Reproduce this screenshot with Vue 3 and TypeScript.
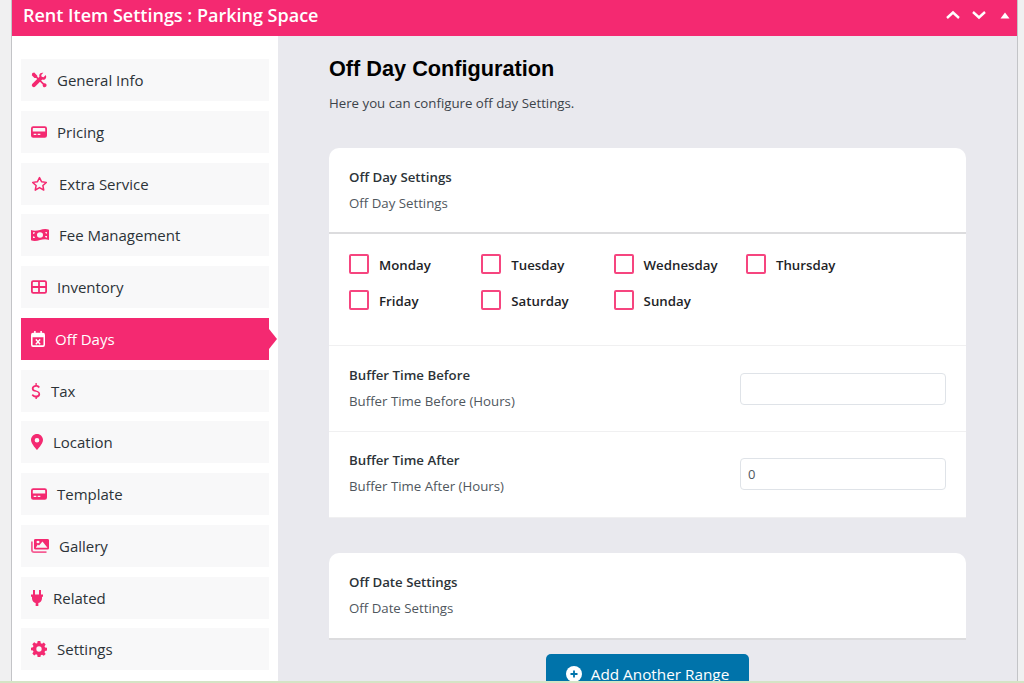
<script setup lang="ts">
const navItems = [
  { label: 'General Info', icon: 'tools', w: 16, gap: 10 },
  { label: 'Pricing', icon: 'card', w: 16, gap: 10 },
  { label: 'Extra Service', icon: 'star', w: 17, gap: 11 },
  { label: 'Fee Management', icon: 'money', w: 18, gap: 10 },
  { label: 'Inventory', icon: 'grid', w: 16, gap: 10 },
  { label: 'Off Days', icon: 'calendar', w: 14, gap: 10, active: true },
  { label: 'Tax', icon: 'dollar', w: 10, gap: 10 },
  { label: 'Location', icon: 'pin', w: 12, gap: 10 },
  { label: 'Template', icon: 'card', w: 16, gap: 10 },
  { label: 'Gallery', icon: 'images', w: 18, gap: 10 },
  { label: 'Related', icon: 'plug', w: 12, gap: 10 },
  { label: 'Settings', icon: 'gear', w: 16, gap: 10 }
]
const days = ['Monday', 'Tuesday', 'Wednesday', 'Thursday', 'Friday', 'Saturday', 'Sunday']
</script>

<template>
  <div class="page">
    <div class="panel">
      <header class="topbar">
        <h2>Rent Item Settings : Parking Space</h2>
        <div class="handles">
          <svg width="16" height="10" viewBox="0 0 16 10"><path d="M2 8l6-5.5L14 8" fill="none" stroke="#fff" stroke-width="2.4" /></svg>
          <svg width="16" height="10" viewBox="0 0 16 10"><path d="M2 2l6 5.5L14 2" fill="none" stroke="#fff" stroke-width="2.4" /></svg>
          <svg class="toggle" width="10" height="7" viewBox="0 0 10 7"><path d="M5 0.5L9.5 6.5H0.5z" fill="#fff" /></svg>
        </div>
      </header>
      <div class="body">
        <nav class="sidebar">
          <a v-for="item in navItems" :key="item.label" class="nav-item" :class="{ active: item.active }">
            <svg class="nav-icon" viewBox="0 0 18 18" :width="item.w" height="16" preserveAspectRatio="none" fill="currentColor">
              <template v-if="item.icon === 'tools'">
                <path d="M1.500 1.200l2.200-.7 3.400 3.600v1.200l7.400 7.400c1-.3 2 0 2.600.9.700 1 .5 2.300-.4 3.100s-2.200.7-3-.2c-.6-.7-.8-1.600-.5-2.400L5.800 6.700H3.900L.9 3.600z" />
                <path d="M16.600 3.500l-2.500 2.400-2.100-.5-.5-2.100L13.900.9c-1.900-.6-4 .3-4.500 2.300-.2.8-.1 1.500.1 2.200L1.600 13.200c-.9.900-.9 2.300 0 3.200s2.300.9 3.200 0l7.900-7.900c.7.2 1.500.3 2.200.1 2-.5 2.900-2.900 1.700-5.100z" />
              </template>
              <path v-else-if="item.icon === 'card'" fill-rule="evenodd" d="M2.500 2.500h13A2.500 2.500 0 0 1 18 5v8a2.500 2.500 0 0 1-2.500 2.500h-13A2.500 2.500 0 0 1 0 13V5a2.500 2.500 0 0 1 2.500-2.500zM2 5v3.500h14V5a.5.5 0 0 0-.5-.5h-13A.5.5 0 0 0 2 5zm1 6v1.500h3V11zm4.500 0v1.500h3V11z" />
              <path v-else-if="item.icon === 'star'" d="M9 1.800l2.200 4.700 5 .7-3.600 3.600.9 5.100L9 13l-4.500 2.900.9-5.100-3.600-3.600 5-.7z" fill="none" stroke="currentColor" stroke-width="1.600" stroke-linejoin="round" />
              <path v-else-if="item.icon === 'money'" fill-rule="evenodd" d="M0 3.500c3 1.200 6 .8 9-.2s6-1.500 9-.3v11.500c-3-1.200-6-.8-9 .2s-6 1.500-9 .3zm9 2.500a3 3 0 1 0 0 6 3 3 0 0 0 0-6zM2 6v2a2 2 0 0 0 2-2zm12 4a2 2 0 0 0 2 2v-2zm0-4a2 2 0 0 0 2 1.500V5.500zM2 10.500V12.500h2a2 2 0 0 0-2-2z" />
              <path v-else-if="item.icon === 'grid'" fill-rule="evenodd" d="M2.500 1.500h13A2.500 2.500 0 0 1 18 4v10a2.500 2.500 0 0 1-2.500 2.500h-13A2.500 2.500 0 0 1 0 14V4a2.500 2.500 0 0 1 2.500-2.500zM2 4v4h6V3.500H2.500A.5.5 0 0 0 2 4zm8-.5V8h6V4a.5.5 0 0 0-.5-.5zM2 10v4a.5.5 0 0 0 .5.5H8V10zm8 0v4.500h5.500a.5.5 0 0 0 .5-.5v-4z" />
              <path v-else-if="item.icon === 'calendar'" fill-rule="evenodd" d="M4 0h2v2h6V0h2v2h1.500A2.500 2.500 0 0 1 18 4.500v11a2.500 2.500 0 0 1-2.500 2.500h-13A2.500 2.500 0 0 1 0 15.500v-11A2.500 2.500 0 0 1 2.500 2H4zM2 7v8.500a.5.5 0 0 0 .5.5h13a.5.5 0 0 0 .5-.5V7zm4.800 1.800L9 11l2.200-2.200 1.200 1.200-2.200 2.200 2.200 2.200-1.200 1.200L9 13.400l-2.200 2.200-1.200-1.200 2.200-2.200L5.600 10z" />
              <path v-else-if="item.icon === 'dollar'" d="M8 0h2.400v2.200c2.300.2 4.300 1 5.600 2l-2 1.800c-1.300-1.100-3-1.700-4.900-1.700-2.600 0-4.300.8-4.300 1.900 0 1.200 1.700 1.600 4.500 2.100 3.700.6 7.200 1.500 7.200 4.300 0 2.100-2.400 3.600-5.900 3.900V18H8v-1.700c-2.900-.2-5.400-1.100-6.800-2.400l2.300-1.600c1.400 1.100 3.300 1.800 5.400 1.800 2.900 0 4.500-.8 4.500-2 0-1.300-2-1.700-4.700-2.200C4.700 9.500 1.400 8.600 1.400 6.100c0-2 2.600-3.500 6.600-3.900z" />
              <path v-else-if="item.icon === 'pin'" fill-rule="evenodd" d="M9 0c5 0 9 3 9 6.800C18 11 9 18 9 18S0 11 0 6.800C0 3 4 0 9 0zm0 4.500a3.500 2.600 0 1 0 0 5.200 3.500 2.600 0 0 0 0-5.200z" />
              <template v-else-if="item.icon === 'images'">
                <path fill-rule="evenodd" d="M4.500 1h12A1.500 1.500 0 0 1 18 2.500v9a1.500 1.500 0 0 1-1.500 1.500h-12A1.500 1.500 0 0 1 3 11.500v-9A1.500 1.500 0 0 1 4.500 1zM7 3a1.500 1.500 0 1 0 0 3 1.500 1.500 0 0 0 0-3zm4.500 1L8 8.500 6.800 7.200 4.800 11h11.700z" />
                <path d="M0 4h1.800v9.500c0 .8.700 1.500 1.500 1.500H15.500v1.800H3c-1.700 0-3-1.300-3-3z" opacity=".75" />
              </template>
              <path v-else-if="item.icon === 'plug'" d="M3 0h3v5h6V0h3v5h3v2.500h-1.500v2c0 2.500-2.500 4.500-5.500 5V18H7v-3.500c-3-.5-5.500-2.500-5.500-5v-2H0V5h3z" />
              <path v-else-if="item.icon === 'gear'" fill-rule="evenodd" d="M7.500 0h3l.5 2.400 1.400.6 2-1.300 2.100 2.100-1.300 2 .6 1.400 2.200.5v3l-2.200.5-.6 1.400 1.300 2-2.100 2.100-2-1.300-1.400.6-.5 2.500h-3L7 15.600l-1.400-.6-2 1.300-2.100-2.100 1.300-2-.6-1.400L0 10.500v-3l2.200-.5.6-1.400-1.300-2 2.100-2.100 2 1.300L7 2.400zM9 6a3 3 0 1 0 0 6 3 3 0 0 0 0-6z" />
            </svg>
            <span :style="{ marginLeft: item.gap + 'px' }">{{ item.label }}</span>
          </a>
        </nav>
        <main class="content">
          <h1>Off Day Configuration</h1>
          <p class="intro">Here you can configure off day Settings.</p>

          <section class="card">
            <div class="card-head">
              <h3>Off Day Settings</h3>
              <span>Off Day Settings</span>
            </div>
            <div class="days">
              <label v-for="day in days" :key="day" class="day">
                <i class="check"></i>
                <b>{{ day }}</b>
              </label>
            </div>
            <div class="row">
              <div class="row-text">
                <h3>Buffer Time Before</h3>
                <span>Buffer Time Before (Hours)</span>
              </div>
              <input type="text" />
            </div>
            <div class="row">
              <div class="row-text">
                <h3>Buffer Time After</h3>
                <span>Buffer Time After (Hours)</span>
              </div>
              <input type="text" value="0" />
            </div>
          </section>

          <section class="card second">
            <div class="card-head">
              <h3>Off Date Settings</h3>
              <span>Off Date Settings</span>
            </div>
          </section>

          <div class="btn-wrap">
            <button class="add-btn">
              <svg width="16" height="16" viewBox="0 0 16 16"><circle cx="8" cy="8" r="8" fill="#fff" /><path d="M8 4.500v7M4.500 8h7" stroke="#0073aa" stroke-width="1.800" /></svg>
              Add Another Range
            </button>
          </div>
        </main>
      </div>
    </div>
    <div class="strip"></div>
  </div>
</template>

<style>
html, body {
  margin: 0;
  overflow: hidden;
}
</style>

<style scoped>
.page {
  position: relative;
  width: 1024px;
  height: 683px;
  overflow: hidden;
  box-sizing: border-box;
  padding: 0 6px 0 11px;
  background: #f0f0f1;
  font-family: "Open Sans", "Noto Sans", sans-serif;
  color: #2c3338;
}
.panel {
  border-left: 1px solid #c3c4c7;
  border-right: 1px solid #c3c4c7;
  height: 100%;
  display: flex;
  flex-direction: column;
}
.topbar {
  height: 36px;
  flex-shrink: 0;
  display: flex;
  align-items: center;
  justify-content: space-between;
  padding: 0 7px 0 11px;
  background: #f42971;
  color: #fff;
}
.topbar h2 {
  margin: 0;
  font-size: 18px;
  font-weight: 600;
  position: relative;
  top: -3px;
}
.handles {
  display: flex;
  align-items: center;
  gap: 10px;
  position: relative;
  top: -3px;
}
.toggle {
  margin-left: 3px;
}
.body {
  flex: 1;
  display: flex;
  min-height: 0;
}
.sidebar {
  width: 266px;
  flex-shrink: 0;
  box-sizing: border-box;
  padding: 23px 9px 0;
  background: #fff;
  display: flex;
  flex-direction: column;
  gap: 9.75px;
}
.nav-item {
  position: relative;
  height: 42px;
  flex-shrink: 0;
  display: flex;
  align-items: center;
  padding: 0 10px;
  background: #f8f8f9;
  font-size: 15px;
  color: #2c3338;
}
.nav-icon {
  color: #f42971;
  flex-shrink: 0;
}
.nav-item.active {
  background: #f42971;
  color: #fff;
}
.nav-item.active .nav-icon {
  color: #fff;
}
.nav-item.active::after {
  content: "";
  position: absolute;
  right: -8px;
  top: 50%;
  margin-top: -10px;
  border-left: 8px solid #f42971;
  border-top: 10px solid transparent;
  border-bottom: 10px solid transparent;
}
.content {
  flex: 1;
  min-width: 0;
  background: #e9e9ee;
  padding: 0 51px;
}
h1 {
  margin: 20px 0 0;
  font-family: "Liberation Sans", Arial, sans-serif;
  font-size: 21.7px;
  line-height: 25px;
  font-weight: 700;
  color: #000;
}
.intro {
  margin: 12px 0 0;
  font-size: 13.25px;
  line-height: 20px;
  color: #3c434a;
}
.card {
  margin-top: 35px;
  background: #fff;
  border-radius: 10px 10px 0 0;
}
.card.second {
  margin-top: 35px;
}
.card-head {
  box-sizing: border-box;
  height: 86px;
  padding: 19px 20px 0;
  border-bottom: 2px solid #dcdcde;
}
.card.second .card-head {
  height: 87px;
  padding-top: 19px;
}
h3 {
  margin: 0;
  font-size: 13.25px;
  line-height: 20px;
  font-weight: 600;
  color: #2c3338;
}
.card-head span, .row-text span {
  display: block;
  margin-top: 6px;
  font-size: 13.25px;
  line-height: 20px;
  color: #50575e;
}
.days {
  box-sizing: border-box;
  height: 112px;
  padding: 20px 20px 0;
  display: grid;
  grid-template-columns: repeat(4, 132.3px);
  grid-auto-rows: 36px;
  border-bottom: 1px solid #f0f0f1;
}
.day {
  display: flex;
  align-items: flex-start;
  gap: 10px;
}
.check {
  box-sizing: border-box;
  width: 20px;
  height: 20px;
  border: 2px solid #f6457f;
  border-radius: 2px;
}
.day b {
  font-size: 13.25px;
  font-weight: 600;
  line-height: 22px;
  color: #1d2327;
}
.row {
  box-sizing: border-box;
  height: 86px;
  padding: 0 20px;
  display: flex;
  align-items: center;
  justify-content: space-between;
  border-bottom: 1px solid #f0f0f1;
}
.row + .row {
  padding-bottom: 1px;
}
.row-text {
  margin-top: -2px;
}
.row input {
  box-sizing: border-box;
  width: 206px;
  height: 32px;
  padding: 0 7px;
  border: 1px solid #dfe3e8;
  border-radius: 4px;
  background: #fff;
  font-family: inherit;
  font-size: 13px;
  color: #50575e;
  outline: none;
}
.btn-wrap {
  display: flex;
  justify-content: center;
  margin-top: 14px;
}
.add-btn {
  width: 203px;
  height: 48px;
  padding: 0 0 8px;
  display: flex;
  align-items: center;
  justify-content: center;
  gap: 9px;
  border: 0;
  border-radius: 5px;
  background: #0073aa;
  color: #fff;
  font-family: inherit;
  font-size: 15.3px;
}
.strip {
  position: absolute;
  left: 0;
  right: 0;
  bottom: 0;
  height: 2px;
  background: #d5e4c5;
}
</style>
